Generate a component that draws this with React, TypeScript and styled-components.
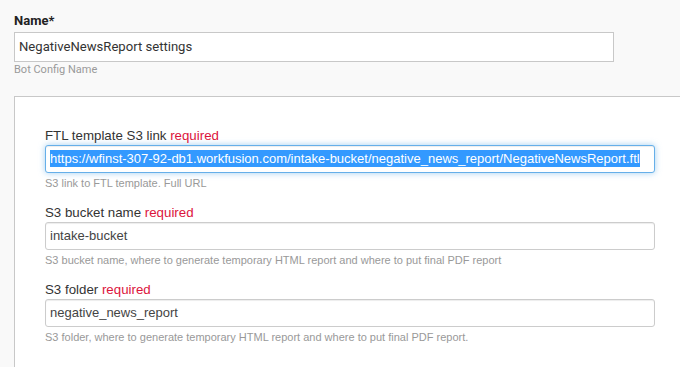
import styled, { createGlobalStyle } from "styled-components";

const GlobalStyle = createGlobalStyle`
  html, body {
    margin: 0;
    padding: 0;
    background: #f9f9f9;
  }
  * {
    box-sizing: border-box;
  }
`;

const Page = styled.div`
  padding: 12px 0 0 14px;
  height: 367px;
  overflow: hidden;
  font-family: Roboto, "Liberation Sans", sans-serif;
`;

const NameLabel = styled.div`
  font-size: 13px;
  font-weight: 700;
  line-height: 18px;
  color: #222;
  margin-bottom: 2px;
`;

const NameInput = styled.div`
  width: 600px;
  height: 30px;
  border: 1px solid #c8c8c8;
  background: #fff;
  padding: 0 4px;
  font-size: 13.1px;
  line-height: 28px;
  color: #333;
`;

const NameHint = styled.div`
  font-size: 11px;
  line-height: 15px;
  color: #999;
  margin-bottom: 19px;
`;

const Panel = styled.div`
  margin-right: -30px;
  min-height: 300px;
  background: #fff;
  border: 1px solid #c8c8c8;
  padding: 30px 0 0 30px;
  font-family: "Liberation Sans", Arial, sans-serif;
`;

const Field = styled.div`
  width: 610px;
  margin-bottom: 13px;
`;

const Label = styled.div`
  font-size: 13.3px;
  line-height: 18px;
  color: #333;
`;

const Required = styled.span`
  color: #dc143c;
`;

const Input = styled.div<{ $focused?: boolean }>`
  height: 28px;
  border: 1px solid ${(p) => (p.$focused ? "#66afe9" : "#ccc")};
  border-radius: 3px;
  background: #fff;
  padding: 0 4px;
  font-size: 13px;
  line-height: 26px;
  color: #444;
  white-space: nowrap;
  overflow: hidden;
  box-shadow: ${(p) =>
    p.$focused
      ? "inset 0 1px 1px rgba(0,0,0,.075), 0 0 6px rgba(102,175,233,.6)"
      : "inset 0 1px 1px rgba(0,0,0,.075)"};
`;

const Selected = styled.span`
  background: #3399ff;
  color: #fff;
  padding: 1px 0;
`;

const Hint = styled.div`
  margin-top: 3px;
  font-size: 11px;
  line-height: 15px;
  color: #999;
`;

const fields = [
  {
    label: "FTL template S3 link",
    value:
      "https://wfinst-307-92-db1.workfusion.com/intake-bucket/negative_news_report/NegativeNewsReport.ftl",
    hint: "S3 link to FTL template. Full URL",
    focused: true,
  },
  {
    label: "S3 bucket name",
    value: "intake-bucket",
    hint: "S3 bucket name, where to generate temporary HTML report and where to put final PDF report",
  },
  {
    label: "S3 folder",
    value: "negative_news_report",
    hint: "S3 folder, where to generate temporary HTML report and where to put final PDF report.",
  },
];

export default function App() {
  return (
    <>
      <GlobalStyle />
      <Page>
        <NameLabel>Name*</NameLabel>
        <NameInput>NegativeNewsReport settings</NameInput>
        <NameHint>Bot Config Name</NameHint>
        <Panel>
          {fields.map((f) => (
            <Field key={f.label}>
              <Label>
                {f.label} <Required>required</Required>
              </Label>
              <Input $focused={f.focused}>
                {f.focused ? <Selected>{f.value}</Selected> : f.value}
              </Input>
              <Hint>{f.hint}</Hint>
            </Field>
          ))}
        </Panel>
      </Page>
    </>
  );
}
